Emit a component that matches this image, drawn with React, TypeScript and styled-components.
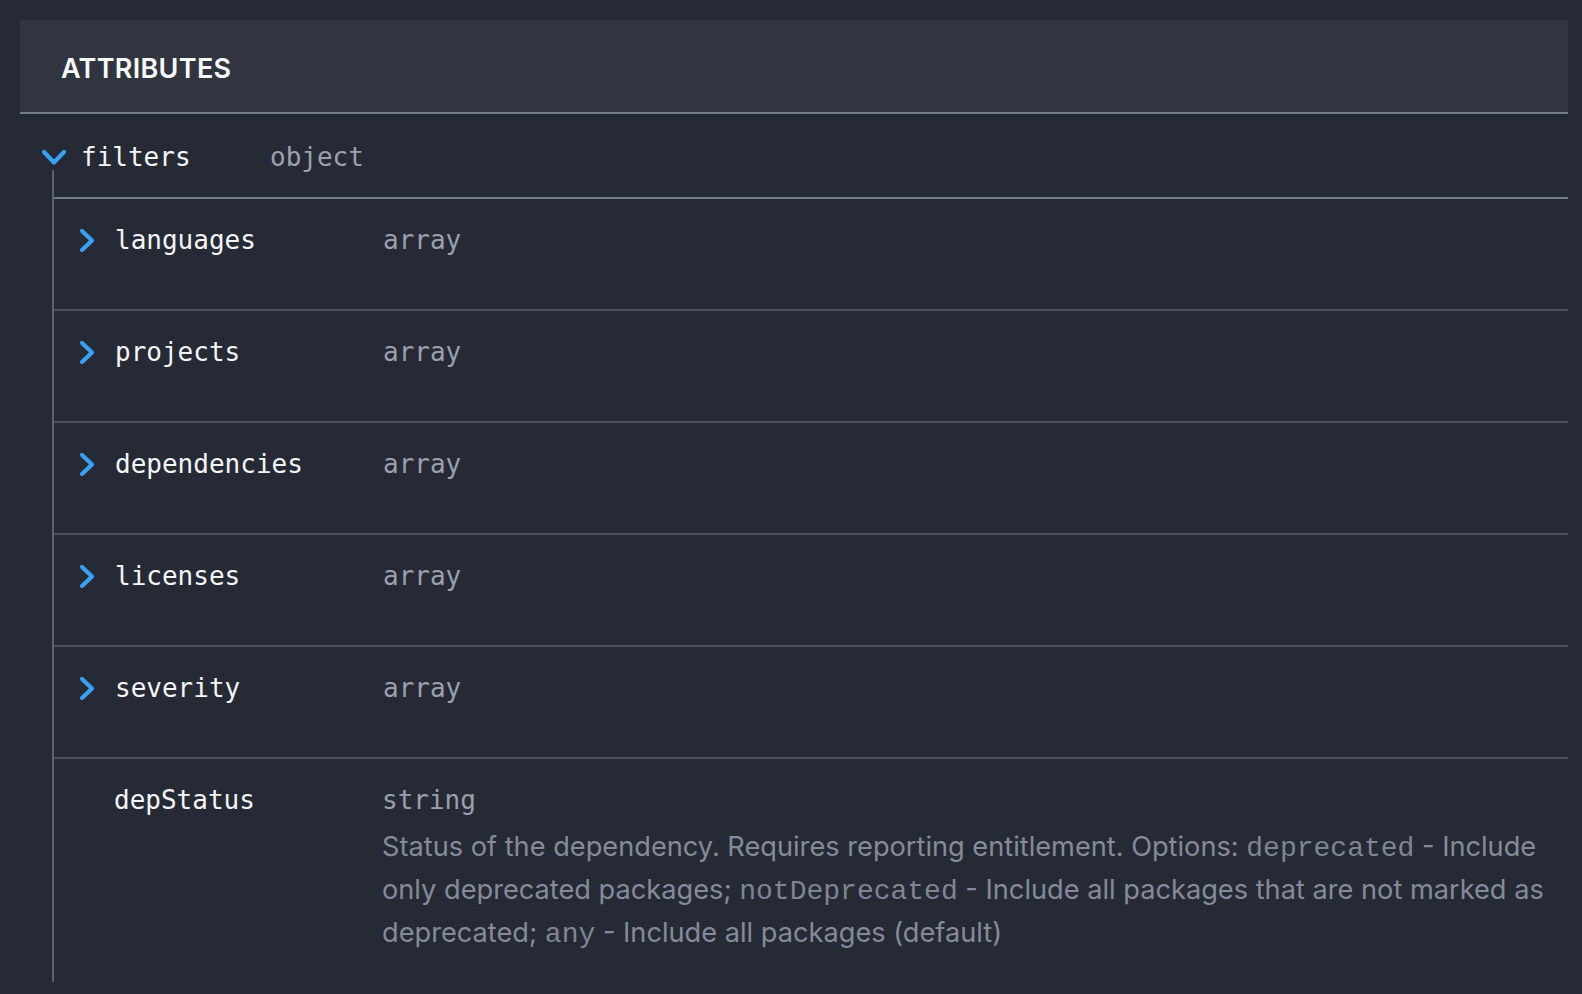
import React from "react"
import styled, { createGlobalStyle } from "styled-components"

const GlobalStyle = createGlobalStyle`
  html, body {
    margin: 0;
    padding: 0;
    background: #262a35;
  }
  body {
    font-family: Inter, "Noto Sans", sans-serif;
    -webkit-font-smoothing: antialiased;
  }
`

const Page = styled.div`
  padding: 20px 14px 13px 20px;
  min-height: 994px;
  box-sizing: border-box;
`

const Panel = styled.section`
  display: flex;
  flex-direction: column;
`

const Header = styled.header`
  display: flex;
  align-items: center;
  height: 94px;
  padding: 5px 0 0 41px;
  box-sizing: border-box;
  background: #313540;
  border-bottom: 2px solid #737a8c;
  color: #f7f8fa;
  font-family: Inter, sans-serif;
  font-weight: 600;
  font-size: 27px;
  line-height: 27px;
  letter-spacing: 0.3px;
`

const Attribute = styled.div`
  display: flex;
  flex-direction: column;
`

const RowHead = styled.div`
  display: flex;
  align-items: center;
  padding: 30px 0 0 21px;
`

const Toggle = styled.span<{ $w: number }>`
  display: flex;
  align-items: center;
  justify-content: center;
  flex: 0 0 ${p => p.$w}px;
  height: 26px;
`

const Name = styled.span<{ $w: number; $gap: number }>`
  flex: 0 0 ${p => p.$w}px;
  margin-left: ${p => p.$gap}px;
  font-family: "DejaVu Sans Mono", monospace;
  font-size: 26px;
  line-height: 26px;
  color: #f4f5f7;
`

const Type = styled.span`
  font-family: "DejaVu Sans Mono", monospace;
  font-size: 26px;
  line-height: 26px;
  color: #9aa0ae;
`

const Children = styled.div`
  display: flex;
  flex-direction: column;
  margin: 0 0 0 32px;
  padding-top: 27px;
  border-left: 2px solid #5b6070;
`

const ChildRow = styled.div<{ $first?: boolean; $bottom?: number }>`
  display: flex;
  flex-direction: column;
  border-top: 2px solid ${p => (p.$first ? "#737a8c" : "#4a4f5c")};
  padding: 28px 8px ${p => p.$bottom ?? 56}px 25px;
`

const ChildHead = styled.div`
  display: flex;
  align-items: center;
`

const Body = styled.div`
  display: flex;
  flex-direction: column;
  padding-left: 303px;
`

const Description = styled.p`
  margin: 12px 0 0;
  font-family: Inter, sans-serif;
  font-size: 27.2px;
  line-height: 43px;
  color: #858b9a;
`

const Code = styled.code`
  font-family: "Courier New", Courier, "Liberation Mono", monospace;
  font-size: 28px;
  line-height: 1;
  color: #7f8594;
`

const ChevronDown = () => (
  <svg width="26" height="17" viewBox="0 0 26 17">
    <polyline
      points="3,3 13,13.5 23,3"
      fill="none"
      stroke="#38a1f3"
      strokeWidth="4.2"
      strokeLinecap="round"
      strokeLinejoin="round"
    />
  </svg>
)

const ChevronRight = () => (
  <svg width="16" height="25" viewBox="0 0 16 25">
    <polyline
      points="3,3 13,12.5 3,22"
      fill="none"
      stroke="#38a1f3"
      strokeWidth="4.2"
      strokeLinecap="round"
      strokeLinejoin="round"
    />
  </svg>
)

const arrays = ["languages", "projects", "dependencies", "licenses", "severity"]

const App = () => (
  <>
    <GlobalStyle />
    <Page>
      <Panel>
        <Header>ATTRIBUTES</Header>
        <Attribute>
          <RowHead>
            <Toggle $w={24}>
              <ChevronDown />
            </Toggle>
            <Name $w={189} $gap={14}>filters</Name>
            <Type>object</Type>
          </RowHead>
          <Children>
            {arrays.map((name, i) => (
              <ChildRow key={name} $first={i === 0}>
                <ChildHead>
                  <Toggle $w={15}>
                    <ChevronRight />
                  </Toggle>
                  <Name $w={268} $gap={20}>{name}</Name>
                  <Type>array</Type>
                </ChildHead>
              </ChildRow>
            ))}
            <ChildRow $bottom={28}>
              <ChildHead>
                <Toggle $w={15} />
                <Name $w={268} $gap={20}>depStatus</Name>
                <Type>string</Type>
              </ChildHead>
              <Body>
                <Description>
                  Status of the dependency. Requires reporting entitlement. Options:{" "}
                  <Code>deprecated</Code> - Include only deprecated packages;{" "}
                  <Code>notDeprecated</Code> - Include all packages that are not marked as
                  deprecated; <Code>any</Code> - Include all packages (default)
                </Description>
              </Body>
            </ChildRow>
          </Children>
        </Attribute>
      </Panel>
    </Page>
  </>
)

export default App
